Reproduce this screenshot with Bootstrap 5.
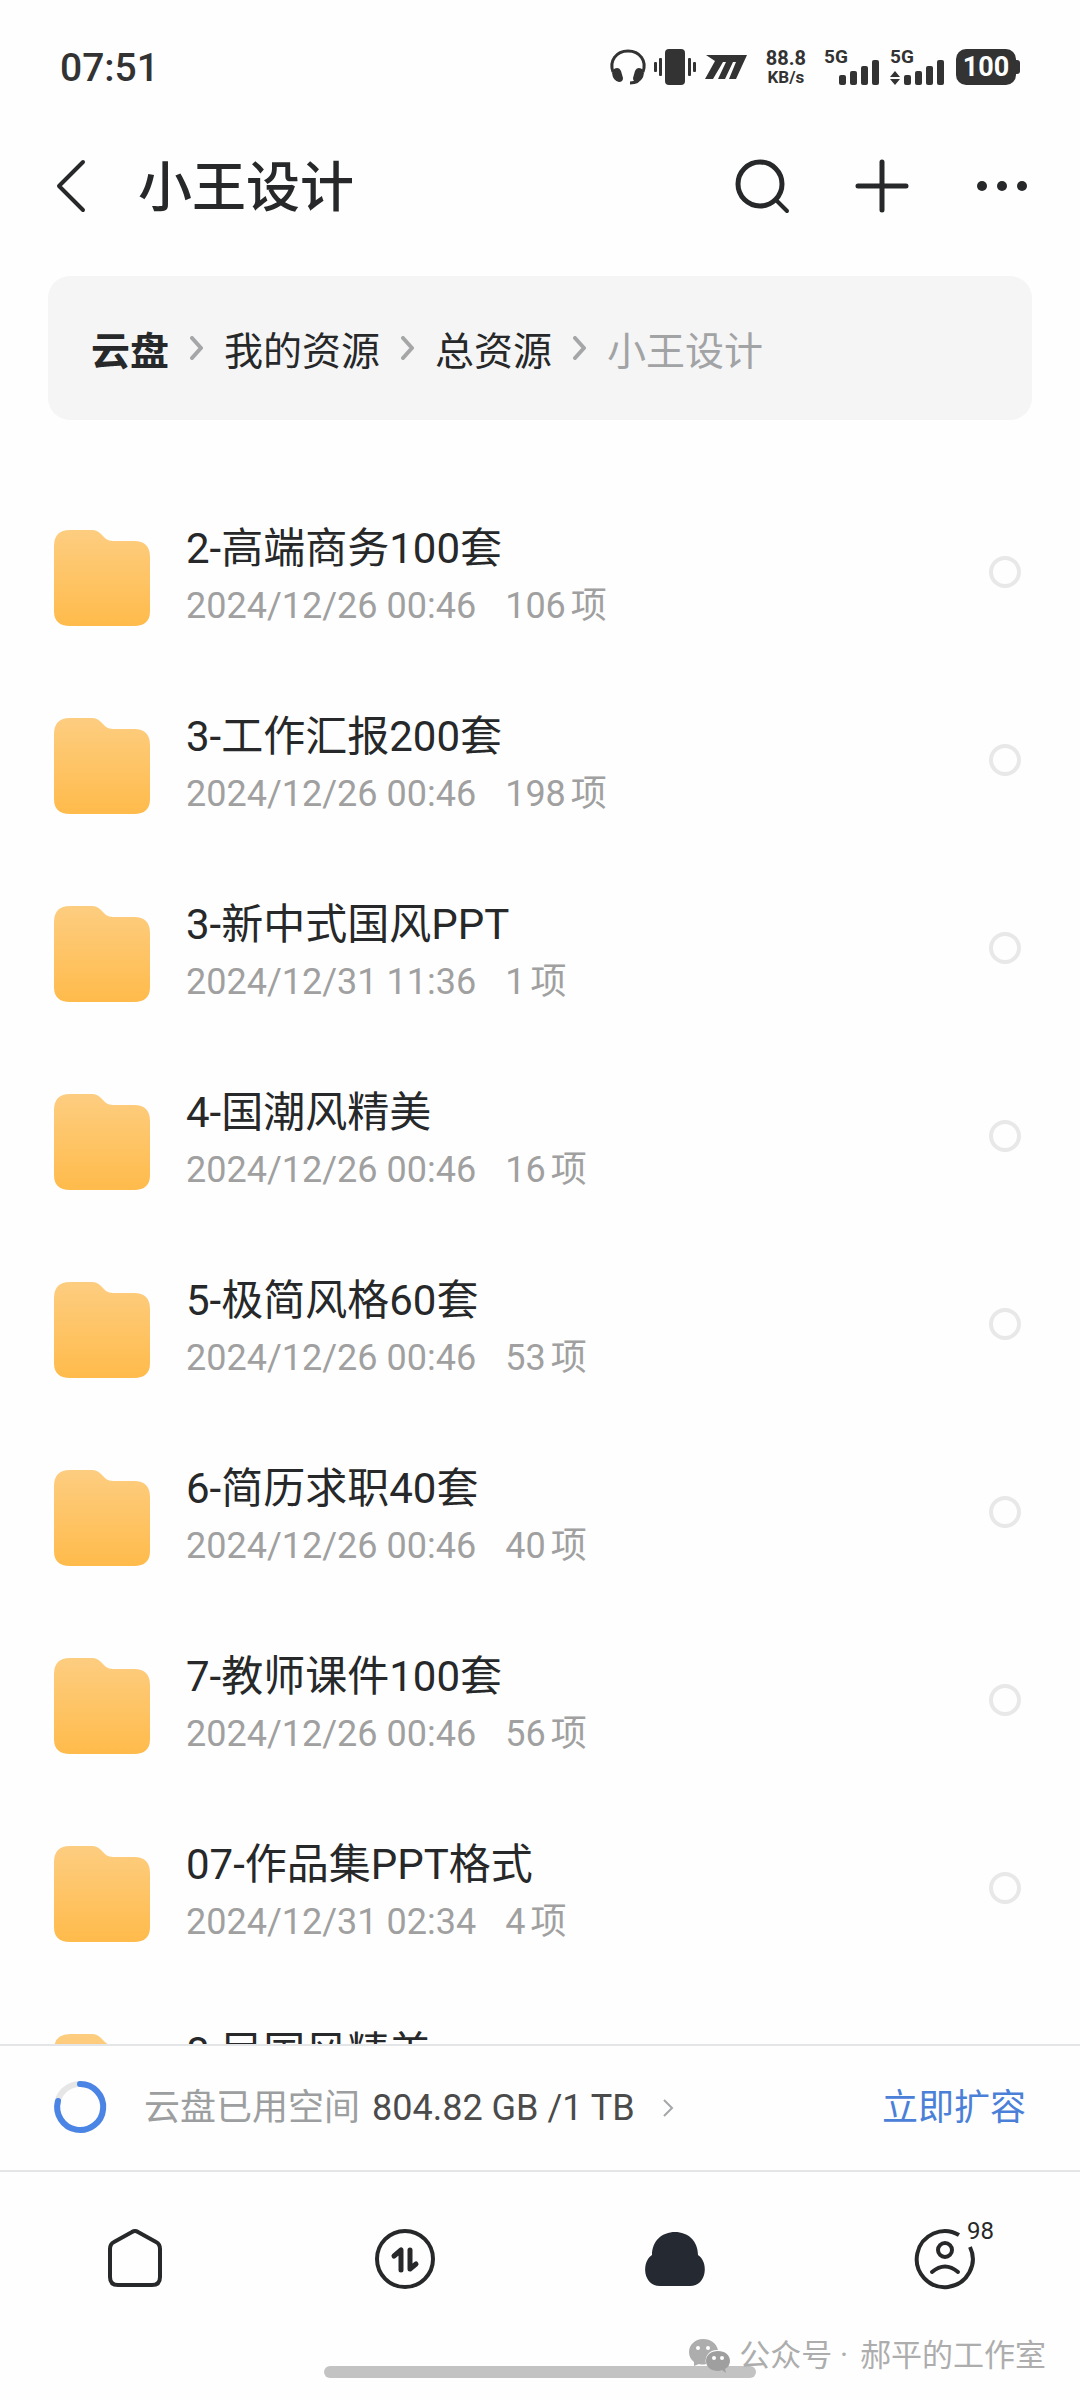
<!DOCTYPE html>
<html lang="zh-CN">
<head>
<meta charset="utf-8">
<meta name="viewport" content="width=device-width, initial-scale=1">
<title>小王设计</title>
<link rel="stylesheet" href="https://cdn.jsdelivr.net/npm/bootstrap@5.3.0/dist/css/bootstrap.min.css">
<style>
  body { background: #fefefe; color: #262829; font-family: Roboto, "Noto Sans CJK SC", sans-serif; }
  svg { display: block; flex: none; overflow: visible; }
  .status-bar { height: 134px; padding: 0 60px; color: #333; }
  .clock { font-size: 39px; font-weight: 500; line-height: 48px; padding-top: 2px; }
  .net-rate { font-size: 20px; font-weight: 700; line-height: 20px; margin: 0 18px; }
  .net-rate small { display: block; font-size: 17px; line-height: 18px; font-weight: 700; }
  .cell { position: relative; height: 36px; }
  .cell-tag { position: absolute; left: 0; top: -2px; font-size: 19px; font-weight: 700; line-height: 20px; }
  .battery { width: 60px; height: 36px; margin-right: 4px; border-radius: 10px; background: #333; color: #fff; font-size: 27px; font-weight: 700; line-height: 36px; position: relative; }
  .battery::after { content: ""; position: absolute; left: 60px; top: 11px; width: 4px; height: 14px; border-radius: 0 3px 3px 0; background: #333; }
  .title-bar { height: 104px; padding: 0 51px 0 56px; }
  .title-bar h1 { font-size: 54px; font-weight: 500; line-height: 64px; padding-top: 6px; }
  .bare { border: 0; background: none; color: inherit; padding: 0; }
  .tools { gap: 66px; }
  .path-box { margin: 38px 48px 0; height: 144px; padding: 0 43px; border-radius: 22px; background: #f5f5f5; font-size: 39px; line-height: 48px; }
  .path-box a, .path-box span { color: #262829; text-decoration: none; padding-top: 8px; }
  .path-box .here { color: #a2a3a5; }
  .path-box svg { margin: 0 21px; }
  .files { padding-top: 64px; min-height: 0; }
  .file-row { height: 188px; padding: 0 59px 0 53px; }
  .file-text { margin-left: 35px; padding-bottom: 4px; }
  .file-name { font-size: 42px; line-height: 48px; }
  .file-meta { font-size: 36px; line-height: 44px; margin-top: 11px; color: #a0a0a0; gap: 29px; }
  .count { display: flex; gap: 5px; }
  .pick.form-check-input { width: 32px; height: 32px; margin: 0 0 12px; border: 4px solid #e8e8e8; background-color: transparent; flex: none; }
  .quota { height: 126px; border-top: 2px solid #e4e5e6; padding: 0 54px 0 53px; font-size: 36px; line-height: 44px; }
  .quota-label { color: #9c9e9f; margin-left: 37px; }
  .quota-value { color: #4b4b4b; margin-left: 12px; }
  .quota a { color: #4b80d8; text-decoration: none; }
  .tabs { height: 176px; border-top: 2px solid #e4e5e6; }
  .tabs a { color: #262829; }
  .count-tag { position: absolute; left: 52px; top: -10px; font-size: 24px; line-height: 24px; }
  .home-zone { height: 54px; padding-top: 20px; position: relative; }
  .home-bar { width: 40%; height: 12px; border-radius: 6px; background: #c3c3c3; }
  .account { position: absolute; right: 34px; bottom: 22px; font-size: 31px; line-height: 44px; color: #adadad; }
</style>
</head>
<body>
<svg width="0" height="0" class="position-absolute" aria-hidden="true">
  <defs>
    <linearGradient id="amber" x1="0" y1="0" x2="0" y2="1">
      <stop offset="0" stop-color="#fdcd80"/><stop offset="1" stop-color="#ffbb4b"/>
    </linearGradient>
    <symbol id="folder" viewBox="0 0 98 98">
      <path fill="url(#amber)" d="M17 1H39Q44 1 48 5L53 10Q56 12 60 12H81Q97 12 97 28V82Q97 97 81 97H17Q1 97 1 82V17Q1 1 17 1Z"/>
    </symbol>
    <symbol id="next" viewBox="0 0 13 24">
      <path d="M2 2L11 12L2 22" fill="none" stroke="#a5a6a8" stroke-width="4" stroke-linecap="round" stroke-linejoin="round"/>
    </symbol>
  </defs>
</svg>

<div class="vh-100 d-flex flex-column overflow-hidden">
  <header class="flex-shrink-0">
    <div class="status-bar d-flex align-items-center justify-content-between">
      <div class="clock">07:51</div>
      <div class="d-flex align-items-center">
        <svg class="me-2" width="36" height="36" viewBox="0 0 36 36" fill="none" stroke="#333">
          <path d="M3 23C-1 12 6 2 18 2S37 12 33 23" stroke-width="3"/>
          <path d="M4 20Q9 17 11 22L13 29Q13 33 9 33Q3 32 2 24ZM32 20Q27 17 25 22L23 29Q23 33 27 33Q33 32 34 24Z" fill="#333" stroke="none"/>
          <path d="M31 27Q29 34 20 34" stroke-width="3"/>
        </svg>
        <svg width="42" height="36" viewBox="0 0 42 36" fill="#333">
          <rect x="11" width="20" height="36" rx="4"/><rect y="13" width="3" height="10" rx="1"/><rect x="5" y="9" width="3" height="18" rx="1"/><rect x="34" y="9" width="3" height="18" rx="1"/><rect x="39" y="13" width="3" height="10" rx="1"/>
        </svg>
        <svg class="ms-2" width="44" height="36" viewBox="0 0 44 36" fill="#333">
          <path d="M2 6H43L32 30H25L32 13H29L21 30H14L22 13H19L9 30H1L11 12Z"/>
        </svg>
        <div class="net-rate text-center">88.8<small>KB/s</small></div>
        <div class="cell me-2">
          <span class="cell-tag">5G</span>
          <svg width="58" height="36" viewBox="0 0 58 36" fill="#333"><rect x="15" y="26" width="7" height="10" rx="2"/><rect x="26" y="22" width="7" height="14" rx="2"/><rect x="37" y="17" width="7" height="19" rx="2"/><rect x="48" y="11" width="7" height="25" rx="2"/></svg>
        </div>
        <div class="cell me-2">
          <span class="cell-tag">5G</span>
          <svg width="58" height="36" viewBox="0 0 58 36" fill="#333"><path d="M0 28L5 22L10 28ZM0 30H10L5 36Z"/><rect x="14" y="26" width="7" height="10" rx="2"/><rect x="25" y="22" width="7" height="14" rx="2"/><rect x="36" y="17" width="7" height="19" rx="2"/><rect x="47" y="11" width="7" height="25" rx="2"/></svg>
        </div>
        <div class="battery text-center">100</div>
      </div>
    </div>

    <div class="title-bar d-flex align-items-center">
      <button class="bare" type="button" aria-label="返回"><svg width="30" height="52" viewBox="0 0 30 52" fill="none" stroke="#262829" stroke-width="4" stroke-linecap="round" stroke-linejoin="round"><path d="M27 2L3 26L27 50"/></svg></button>
      <h1 class="mb-0 ms-5 ps-1 me-auto">小王设计</h1>
      <div class="tools d-flex align-items-center">
        <button class="bare" type="button" aria-label="搜索"><svg width="54" height="54" viewBox="0 0 54 54" fill="none" stroke="#262829" stroke-width="5" stroke-linecap="round"><circle cx="25" cy="25" r="22"/><path d="M41 41L52 52" stroke-width="4"/></svg></button>
        <button class="bare" type="button" aria-label="添加"><svg width="54" height="54" viewBox="0 0 54 54" stroke="#262829" stroke-width="5" stroke-linecap="round"><path d="M27 3V51M3 27H51"/></svg></button>
        <button class="bare" type="button" aria-label="更多"><svg width="54" height="54" viewBox="0 0 54 54" fill="#262829"><circle cx="7" cy="27" r="5"/><circle cx="27" cy="27" r="5"/><circle cx="47" cy="27" r="5"/></svg></button>
      </div>
    </div>

    <nav class="path-box d-flex align-items-center" aria-label="路径">
      <a href="#" class="fw-bold">云盘</a><svg width="13" height="24"><use href="#next"/></svg>
      <a href="#">我的资源</a><svg width="13" height="24"><use href="#next"/></svg>
      <a href="#">总资源</a><svg width="13" height="24"><use href="#next"/></svg>
      <span class="here">小王设计</span>
    </nav>
  </header>

  <main class="files flex-grow-1 overflow-hidden">
    <div class="file-row d-flex align-items-center">
      <svg width="98" height="98"><use href="#folder"/></svg>
      <label class="file-text flex-grow-1" for="f1"><span class="file-name d-block">2-高端商务100套</span><span class="file-meta d-flex"><span>2024/12/26 00:46</span><span class="count"><span>106</span><span>项</span></span></span></label>
      <input class="form-check-input pick rounded-circle" type="checkbox" id="f1">
    </div>
    <div class="file-row d-flex align-items-center">
      <svg width="98" height="98"><use href="#folder"/></svg>
      <label class="file-text flex-grow-1" for="f2"><span class="file-name d-block">3-工作汇报200套</span><span class="file-meta d-flex"><span>2024/12/26 00:46</span><span class="count"><span>198</span><span>项</span></span></span></label>
      <input class="form-check-input pick rounded-circle" type="checkbox" id="f2">
    </div>
    <div class="file-row d-flex align-items-center">
      <svg width="98" height="98"><use href="#folder"/></svg>
      <label class="file-text flex-grow-1" for="f3"><span class="file-name d-block">3-新中式国风PPT</span><span class="file-meta d-flex"><span>2024/12/31 11:36</span><span class="count"><span>1</span><span>项</span></span></span></label>
      <input class="form-check-input pick rounded-circle" type="checkbox" id="f3">
    </div>
    <div class="file-row d-flex align-items-center">
      <svg width="98" height="98"><use href="#folder"/></svg>
      <label class="file-text flex-grow-1" for="f4"><span class="file-name d-block">4-国潮风精美</span><span class="file-meta d-flex"><span>2024/12/26 00:46</span><span class="count"><span>16</span><span>项</span></span></span></label>
      <input class="form-check-input pick rounded-circle" type="checkbox" id="f4">
    </div>
    <div class="file-row d-flex align-items-center">
      <svg width="98" height="98"><use href="#folder"/></svg>
      <label class="file-text flex-grow-1" for="f5"><span class="file-name d-block">5-极简风格60套</span><span class="file-meta d-flex"><span>2024/12/26 00:46</span><span class="count"><span>53</span><span>项</span></span></span></label>
      <input class="form-check-input pick rounded-circle" type="checkbox" id="f5">
    </div>
    <div class="file-row d-flex align-items-center">
      <svg width="98" height="98"><use href="#folder"/></svg>
      <label class="file-text flex-grow-1" for="f6"><span class="file-name d-block">6-简历求职40套</span><span class="file-meta d-flex"><span>2024/12/26 00:46</span><span class="count"><span>40</span><span>项</span></span></span></label>
      <input class="form-check-input pick rounded-circle" type="checkbox" id="f6">
    </div>
    <div class="file-row d-flex align-items-center">
      <svg width="98" height="98"><use href="#folder"/></svg>
      <label class="file-text flex-grow-1" for="f7"><span class="file-name d-block">7-教师课件100套</span><span class="file-meta d-flex"><span>2024/12/26 00:46</span><span class="count"><span>56</span><span>项</span></span></span></label>
      <input class="form-check-input pick rounded-circle" type="checkbox" id="f7">
    </div>
    <div class="file-row d-flex align-items-center">
      <svg width="98" height="98"><use href="#folder"/></svg>
      <label class="file-text flex-grow-1" for="f8"><span class="file-name d-block">07-作品集PPT格式</span><span class="file-meta d-flex"><span>2024/12/31 02:34</span><span class="count"><span>4</span><span>项</span></span></span></label>
      <input class="form-check-input pick rounded-circle" type="checkbox" id="f8">
    </div>
    <div class="file-row d-flex align-items-center">
      <svg width="98" height="98"><use href="#folder"/></svg>
      <label class="file-text flex-grow-1" for="f9"><span class="file-name d-block">8-民国风精美</span><span class="file-meta d-flex"><span>&nbsp;</span></span></label>
      <input class="form-check-input pick rounded-circle" type="checkbox" id="f9">
    </div>
  </main>

  <footer class="flex-shrink-0">
    <div class="quota d-flex align-items-center">
      <svg width="54" height="54" viewBox="0 0 54 54" fill="none" stroke-width="6"><circle cx="27" cy="26" r="23" stroke="#e6e6e6"/><path d="M27 3A23 23 0 1 1 5 20" stroke="#4a84e4" stroke-linecap="round"/></svg>
      <span class="quota-label">云盘已用空间</span>
      <span class="quota-value">804.82 GB /1 TB</span>
      <svg class="ms-4 me-auto ps-1" width="14" height="18" viewBox="0 0 10 18" fill="none" stroke="#a5a6a8" stroke-width="2"><path d="M1 1L9 9L1 17"/></svg>
      <a href="#">立即扩容</a>
    </div>
    <nav class="tabs row g-0 align-items-center">
      <a class="col d-flex justify-content-center" href="#" aria-label="首页"><svg width="60" height="60" viewBox="0 0 60 60" fill="none" stroke="#262829" stroke-width="4"><path d="M27 3Q30 1 33 3L51 13Q55 15 55 20V48Q55 56 47 56H13Q5 56 5 48V20Q5 15 9 13Z"/></svg></a>
      <a class="col d-flex justify-content-center" href="#" aria-label="传输"><svg width="60" height="60" viewBox="0 0 60 60" fill="none" stroke="#262829" stroke-width="5" stroke-linecap="round" stroke-linejoin="round"><circle cx="30" cy="30" r="28" stroke-width="4"/><path d="M19 27L26 21V41M35 21V40L41 35"/></svg></a>
      <a class="col d-flex justify-content-center" href="#" aria-label="云盘"><svg width="60" height="60" viewBox="0 0 60 60" fill="#252932"><path d="M7 26C7 12 17 3 30 3S53 12 53 26C64 33 62 57 45 57H15C-2 57 -4 33 7 26Z"/></svg></a>
      <a class="col d-flex justify-content-center text-decoration-none" href="#" aria-label="我的 98"><span class="position-relative"><svg width="60" height="60" viewBox="0 0 60 60" fill="none" stroke="#262829" stroke-width="4"><path d="M44 6A28 28 0 1 0 55 18"/><circle cx="30" cy="21" r="7"/><path d="M17 43Q30 32 43 43" stroke-linecap="round"/></svg><span class="count-tag">98</span></span></a>
    </nav>
    <div class="home-zone">
      <div class="home-bar mx-auto"></div>
      <div class="account d-flex align-items-center">
        <svg class="me-2" width="42" height="34" viewBox="0 0 42 34"><path fill="#adadad" d="M14 0C6 0 0 6 0 13Q0 19 5 23L5 27L10 25Q13 26 17 25C15 16 22 10 29 11C27 4 22 0 14 0Z"/><path fill="#9f9f9f" d="M29 12C22 12 17 16 17 22S22 32 29 32Q31 32 33 31L37 34L36 30Q41 27 41 22C41 16 36 12 29 12Z"/><g fill="#fff"><circle cx="9" cy="9" r="2"/><circle cx="19" cy="9" r="2"/><circle cx="25" cy="19" r="2"/><circle cx="33" cy="19" r="2"/></g></svg>
        <span class="me-1">公众号 · </span><span class="ms-2">郝平的工作室</span>
      </div>
    </div>
  </footer>
</div>
<script src="https://cdn.jsdelivr.net/npm/bootstrap@5.3.0/dist/js/bootstrap.bundle.min.js"></script>
</body>
</html>
